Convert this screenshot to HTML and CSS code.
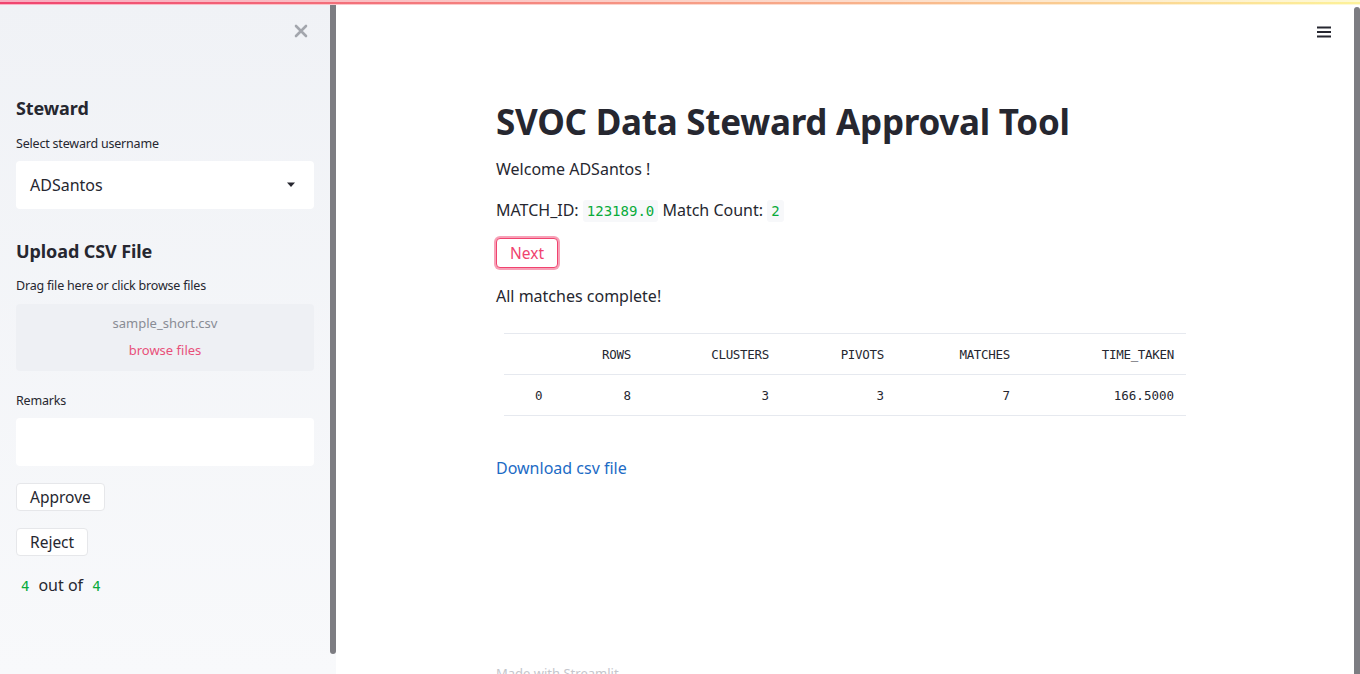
FILE: index.html
```html
<!DOCTYPE html>
<html lang="en">
<head>
<meta charset="utf-8">
<title>SVOC Data Steward Approval Tool</title>
<link rel="stylesheet" href="styles.css">
</head>
<body>
<div class="decoration"></div>
<div class="app">
  <aside class="sidebar">
    <div class="sidebar-content">
      <div class="close-row">
        <svg class="close-icon" width="14" height="14" viewBox="0 0 14 14"><path d="M2 2 L12 12 M12 2 L2 12" stroke="#a3a6ad" stroke-width="2.6" stroke-linecap="round"/></svg>
      </div>
      <h3 class="side-h">Steward</h3>
      <label class="side-label">Select steward username</label>
      <div class="select-box">
        <span>ADSantos</span>
        <svg width="10" height="6" viewBox="0 0 10 6"><path d="M1 0.5 H9 L5 5 Z" fill="#262730"/></svg>
      </div>
      <h3 class="side-h upload-h">Upload CSV File</h3>
      <label class="side-label">Drag file here or click browse files</label>
      <div class="dropzone">
        <div class="file-name">sample_short.csv</div>
        <div class="browse">browse files</div>
      </div>
      <label class="side-label remarks-label">Remarks</label>
      <div class="text-input"></div>
      <button class="side-btn approve">Approve</button>
      <button class="side-btn reject">Reject</button>
      <p class="progress"><code class="green">4</code> out of <code class="green">4</code></p>
    </div>
    <div class="side-scroll"><div class="side-thumb"></div></div>
  </aside>
  <main class="main">
    <div class="main-inner">
      <div class="toolbar">
        <svg width="14" height="12" viewBox="0 0 14 12"><path d="M0 1.5 H14 M0 6 H14 M0 10.5 H14" stroke="#262730" stroke-width="1.8"/></svg>
      </div>
      <div class="block-container">
        <h1 class="title">SVOC Data Steward Approval Tool</h1>
        <p class="para welcome">Welcome ADSantos !</p>
        <p class="para match">MATCH_ID: <code class="green code-bg">123189.0</code> Match Count: <code class="green code-bg">2</code></p>
        <button class="next-btn">Next</button>
        <p class="para complete">All matches complete!</p>
        <table class="df">
          <colgroup>
            <col class="c-idx"><col class="c-rows"><col class="c-clusters"><col class="c-pivots"><col class="c-matches"><col class="c-time">
          </colgroup>
          <thead>
            <tr><th class="idx"></th><th>ROWS</th><th>CLUSTERS</th><th>PIVOTS</th><th>MATCHES</th><th>TIME_TAKEN</th></tr>
          </thead>
          <tbody>
            <tr><td class="idx">0</td><td>8</td><td>3</td><td>3</td><td>7</td><td>166.5000</td></tr>
          </tbody>
        </table>
        <a class="download" href="#">Download csv file</a>
        <footer class="footer">Made with Streamlit</footer>
      </div>
    </div>
    <div class="main-scroll"><div class="main-thumb"></div></div>
  </main>
</div>
</body>
</html>
```

FILE: styles.css
```css
html, body {
  margin: 0;
  padding: 0;
  height: 674px;
  overflow: hidden;
  background: #ffffff;
  font-family: "Noto Sans", "Open Sans", sans-serif;
  color: #262730;
}

.decoration {
  position: absolute;
  top: 0;
  left: 0;
  right: 0;
  height: 5px;
  background: linear-gradient(90deg, #f0436f, #fdf29a);
  z-index: 10;
  box-shadow: inset 0 2px 0 rgba(255,255,255,0.55), inset 0 -1px 0 rgba(255,255,255,0.6);
}

.app {
  display: flex;
  height: 674px;
}

.sidebar {
  width: 336px;
  flex: none;
  display: flex;
  background: linear-gradient(180deg, #f0f2f6 0%, #f8f9fb 100%);
}

.sidebar-content {
  width: 298px;
  flex: none;
  padding: 0 16px;
  display: flex;
  flex-direction: column;
  align-items: flex-start;
}

.close-row {
  align-self: stretch;
  display: flex;
  justify-content: flex-end;
  padding-top: 24px;
  padding-right: 6px;
  height: 14px;
}

.side-scroll {
  width: 6px;
  flex: none;
  padding-top: 4px;
  padding-bottom: 20px;
  display: flex;
}
.side-thumb {
  flex: 1;
  background: #7d7d82;
  border-radius: 0 0 3px 3px;
}

.side-h {
  margin: 58px 0 0;
  font-size: 18px;
  font-weight: 700;
  line-height: 24px;
  letter-spacing: -0.1px;
}
.upload-h { margin-top: 30px; }

.side-label {
  font-size: 12.5px;
  line-height: 18px;
  margin-top: 15px;
  letter-spacing: -0.2px;
}
.upload-h + .side-label { margin-top: 14px; }

.select-box {
  align-self: stretch;
  margin-top: 8px;
  height: 48px;
  background: #ffffff;
  border-radius: 4px;
  display: flex;
  align-items: center;
  justify-content: space-between;
  padding: 0 18px 0 14px;
  font-size: 16px;
}

.dropzone {
  align-self: stretch;
  margin-top: 9px;
  height: 67px;
  background: #eef0f4;
  border-radius: 4px;
  display: flex;
  flex-direction: column;
  align-items: center;
  font-size: 13px;
}
.file-name { color: #898c94; margin-top: 10px; line-height: 18px; }
.browse { color: #e8507a; margin-top: 9px; line-height: 18px; }

.remarks-label { margin-top: 21px; }

.text-input {
  align-self: stretch;
  margin-top: 8px;
  height: 48px;
  background: #ffffff;
  border-radius: 4px;
}

.side-btn {
  font-family: inherit;
  font-size: 15.5px;
  color: #262730;
  background: #ffffff;
  border: 1px solid #e6e7ea;
  border-radius: 4px;
  height: 28px;
  padding: 0 13px;
  line-height: 26px;
}
.approve { margin-top: 17px; }
.reject { margin-top: 17px; }

.progress {
  margin: 17px 0 0;
  font-size: 16px;
  line-height: 24px;
}

code {
  font-family: "DejaVu Sans Mono", "Liberation Mono", monospace;
  font-size: 14px;
}
.green { color: #09ab3b; padding: 0 0.35em; }
.code-bg { background: #f7f8fa; padding: 3px 4px; border-radius: 3px; }

.main {
  flex: 1;
  display: flex;
  position: relative;
}
.main-inner {
  flex: 1;
  display: flex;
  flex-direction: column;
}
.toolbar {
  display: flex;
  justify-content: flex-end;
  padding: 26px 23px 0 0;
  height: 12px;
}
.main-scroll {
  width: 6px;
  padding-top: 7px;
  display: flex;
}
.main-thumb { flex: 1; background: #7d7d82; border-radius: 3px 3px 0 0; }

.block-container {
  margin-left: 160px;
  width: 698px;
  display: flex;
  flex-direction: column;
  align-items: flex-start;
}

.title {
  margin: 62px 0 0;
  font-size: 35px;
  line-height: 44px;
  font-weight: 700;
  letter-spacing: -0.25px;
}

.para {
  margin: 0;
  font-size: 16px;
  line-height: 24px;
}
.welcome { margin-top: 13px; }
.match { margin-top: 17px; }
.complete { margin-top: 16px; }

.next-btn {
  margin-top: 15px;
  font-family: inherit;
  font-size: 15.5px;
  color: #f0436f;
  background: #ffffff;
  border: 1px solid #f0436f;
  border-radius: 4px;
  height: 30px;
  padding: 0 13px;
  box-shadow: 0 0 0 2px rgba(240, 67, 111, 0.5);
  line-height: 28px;
}

.df {
  margin: 25px 0 0 8px;
  width: 682px;
  table-layout: fixed;
  border-collapse: collapse;
  font-family: "DejaVu Sans Mono", "Liberation Mono", monospace;
  font-size: 12.5px;
  color: #262730;
  border-top: 1px solid #e6e9ef;
}
.c-idx { width: 60px; }
.c-rows { width: 79px; }
.c-clusters { width: 138px; }
.c-pivots { width: 115px; }
.c-matches { width: 126px; }
.c-time { width: 164px; }
.df th, .df td {
  height: 40px;
  padding: 0 12px;
  text-align: right;
  border-bottom: 1px solid #e6e9ef;
}
.df th { font-weight: 500; letter-spacing: -0.3px; }
.df .idx { text-align: left; padding-left: 31px; font-weight: 500; }

.download {
  margin-top: 40px;
  color: #1c6bc5;
  text-decoration: none;
  font-size: 16px;
  line-height: 24px;
}

.footer {
  margin-top: 184px;
  font-size: 13px;
  color: #c4c6cc;
  line-height: 18px;
}
```
